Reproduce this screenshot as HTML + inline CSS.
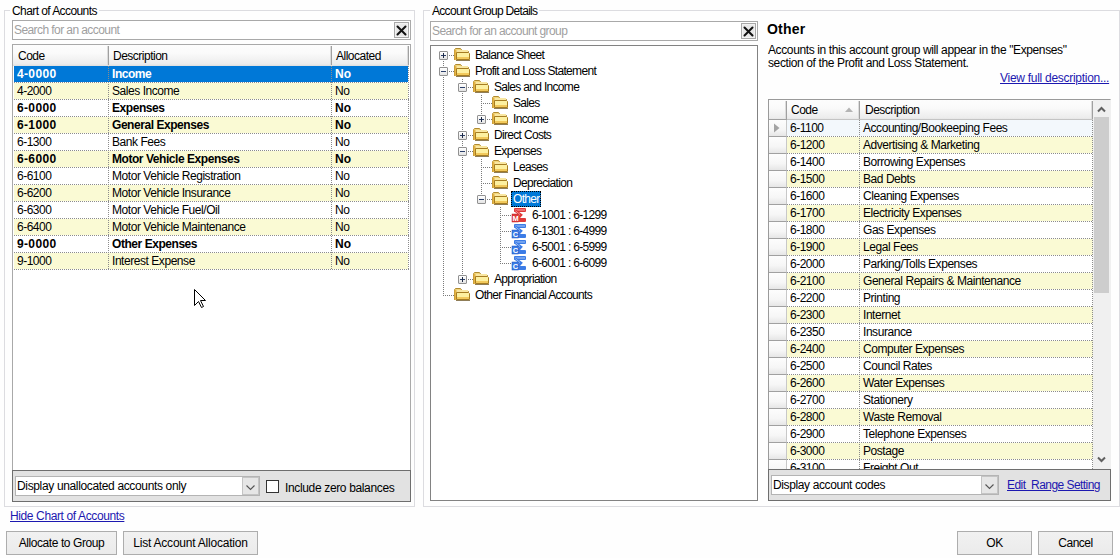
<!DOCTYPE html><html><head><meta charset="utf-8"><style>
*{box-sizing:border-box;margin:0;padding:0}
html,body{width:1120px;height:558px;overflow:hidden;background:#fefefe;font-family:"Liberation Sans",sans-serif;font-size:12px;letter-spacing:-0.5px;color:#000}
.a{position:absolute}
.grp{position:absolute;border:1px solid #dcdce0}
.gt{position:absolute;background:#fefefe;padding:0 2px;line-height:13px;white-space:nowrap}
.sb{position:absolute;border:1px solid #a9a9a9;background:#fff}
.ph{position:absolute;color:#a0a0a0;white-space:nowrap;line-height:13px}
.xb{position:absolute;width:15px;height:16px;border:1px solid #a8a8a8;background:#e8e8e8;box-shadow:inset 0 0 0 1px #f2f2f2}
.t{position:absolute;white-space:nowrap;line-height:13px}
.b{font-weight:bold;letter-spacing:-0.45px}
.btn{position:absolute;border:1px solid #adadad;background:linear-gradient(#f1f1f1,#ebebeb);text-align:center;line-height:22px;white-space:nowrap}
.lnk{position:absolute;color:#1c18b0;text-decoration:underline;white-space:nowrap;line-height:13px}
.bar{position:absolute;background:#e2e2e2;border:1px solid #6e6e6e}
.cb{position:absolute;background:#fff;border:1px solid #b4b4b4}
.cba{position:absolute;top:0;right:0;width:17px;bottom:0;background:#e6e6e6;border:1px solid #c4c4c4}
.hd{position:absolute;background:linear-gradient(#fdfdfd,#fafafa 40%,#ececec 90%,#dedede)}
.hdv{position:absolute;width:2px;background:linear-gradient(to right,#dcdcdc 0 1px,#a0a0a0 1px 2px)}
.dh{position:absolute;height:1px;background:repeating-linear-gradient(to right,#8c8c8c 0 1px,transparent 1px 2px)}
.dv{position:absolute;width:1px;background:repeating-linear-gradient(to bottom,#8c8c8c 0 1px,transparent 1px 2px)}
.c{position:absolute;white-space:nowrap;line-height:17px;height:17px}
</style></head><body>
<div class="grp" style="left:4px;top:10px;width:411px;height:497px"></div>
<div class="gt" style="left:10px;top:5px;letter-spacing:-0.58px">Chart of Accounts</div>
<div class="sb" style="left:12px;top:20px;width:399px;height:20px"></div>
<div class="ph" style="left:14px;top:24px;letter-spacing:-0.58px">Search for an account</div>
<div class="xb" style="left:394px;top:22px"><svg width="13" height="14" style="position:absolute;left:0;top:0"><path d="M2.5,3.5 L10.5,11.5 M10.5,3.5 L2.5,11.5" stroke="#111" stroke-width="2" stroke-linecap="round"/></svg></div>
<div class="a" style="left:12px;top:44px;width:399px;height:427px;border:1px solid #a9a9a9;background:#fff"></div>
<div class="hd" style="left:13px;top:45px;width:396px;height:21px"></div>
<div class="hdv" style="left:107px;top:46px;height:19px"></div>
<div class="hdv" style="left:330px;top:46px;height:19px"></div>
<div class="hdv" style="left:407px;top:46px;height:19px"></div>
<div class="c" style="left:18px;top:48px">Code</div>
<div class="c" style="left:113px;top:48px">Description</div>
<div class="c" style="left:336px;top:48px">Allocated</div>
<div class="a" style="left:14px;top:66px;width:394px;height:16px;background:#0078d7"></div>
<div class="dh" style="left:14px;top:82px;width:395px"></div>
<div class="c b" style="left:17px;top:66px;color:#fff;letter-spacing:0.35px">4-0000</div>
<div class="c b" style="left:112px;top:66px;color:#fff;letter-spacing:-0.45px">Income</div>
<div class="c b" style="left:335px;top:66px;color:#fff;letter-spacing:0px">No</div>
<div class="a" style="left:14px;top:83px;width:394px;height:16px;background:#fafad4"></div>
<div class="dh" style="left:14px;top:99px;width:395px"></div>
<div class="c" style="left:17px;top:83px;color:#000">4-2000</div>
<div class="c" style="left:112px;top:83px;color:#000;letter-spacing:-0.45px">Sales Income</div>
<div class="c" style="left:335px;top:83px;color:#000">No</div>
<div class="a" style="left:14px;top:100px;width:394px;height:16px;background:#ffffff"></div>
<div class="dh" style="left:14px;top:116px;width:395px"></div>
<div class="c b" style="left:17px;top:100px;color:#000;letter-spacing:0.35px">6-0000</div>
<div class="c b" style="left:112px;top:100px;color:#000;letter-spacing:-0.45px">Expenses</div>
<div class="c b" style="left:335px;top:100px;color:#000;letter-spacing:0px">No</div>
<div class="a" style="left:14px;top:117px;width:394px;height:16px;background:#fafad4"></div>
<div class="dh" style="left:14px;top:133px;width:395px"></div>
<div class="c b" style="left:17px;top:117px;color:#000;letter-spacing:0.35px">6-1000</div>
<div class="c b" style="left:112px;top:117px;color:#000;letter-spacing:-0.45px">General Expenses</div>
<div class="c b" style="left:335px;top:117px;color:#000;letter-spacing:0px">No</div>
<div class="a" style="left:14px;top:134px;width:394px;height:16px;background:#ffffff"></div>
<div class="dh" style="left:14px;top:150px;width:395px"></div>
<div class="c" style="left:17px;top:134px;color:#000">6-1300</div>
<div class="c" style="left:112px;top:134px;color:#000;letter-spacing:-0.45px">Bank Fees</div>
<div class="c" style="left:335px;top:134px;color:#000">No</div>
<div class="a" style="left:14px;top:151px;width:394px;height:16px;background:#fafad4"></div>
<div class="dh" style="left:14px;top:167px;width:395px"></div>
<div class="c b" style="left:17px;top:151px;color:#000;letter-spacing:0.35px">6-6000</div>
<div class="c b" style="left:112px;top:151px;color:#000;letter-spacing:-0.45px">Motor Vehicle Expenses</div>
<div class="c b" style="left:335px;top:151px;color:#000;letter-spacing:0px">No</div>
<div class="a" style="left:14px;top:168px;width:394px;height:16px;background:#ffffff"></div>
<div class="dh" style="left:14px;top:184px;width:395px"></div>
<div class="c" style="left:17px;top:168px;color:#000">6-6100</div>
<div class="c" style="left:112px;top:168px;color:#000;letter-spacing:-0.45px">Motor Vehicle Registration</div>
<div class="c" style="left:335px;top:168px;color:#000">No</div>
<div class="a" style="left:14px;top:185px;width:394px;height:16px;background:#fafad4"></div>
<div class="dh" style="left:14px;top:201px;width:395px"></div>
<div class="c" style="left:17px;top:185px;color:#000">6-6200</div>
<div class="c" style="left:112px;top:185px;color:#000;letter-spacing:-0.45px">Motor Vehicle Insurance</div>
<div class="c" style="left:335px;top:185px;color:#000">No</div>
<div class="a" style="left:14px;top:202px;width:394px;height:16px;background:#ffffff"></div>
<div class="dh" style="left:14px;top:218px;width:395px"></div>
<div class="c" style="left:17px;top:202px;color:#000">6-6300</div>
<div class="c" style="left:112px;top:202px;color:#000;letter-spacing:-0.45px">Motor Vehicle Fuel/Oil</div>
<div class="c" style="left:335px;top:202px;color:#000">No</div>
<div class="a" style="left:14px;top:219px;width:394px;height:16px;background:#fafad4"></div>
<div class="dh" style="left:14px;top:235px;width:395px"></div>
<div class="c" style="left:17px;top:219px;color:#000">6-6400</div>
<div class="c" style="left:112px;top:219px;color:#000;letter-spacing:-0.45px">Motor Vehicle Maintenance</div>
<div class="c" style="left:335px;top:219px;color:#000">No</div>
<div class="a" style="left:14px;top:236px;width:394px;height:16px;background:#ffffff"></div>
<div class="dh" style="left:14px;top:252px;width:395px"></div>
<div class="c b" style="left:17px;top:236px;color:#000;letter-spacing:0.35px">9-0000</div>
<div class="c b" style="left:112px;top:236px;color:#000;letter-spacing:-0.45px">Other Expenses</div>
<div class="c b" style="left:335px;top:236px;color:#000;letter-spacing:0px">No</div>
<div class="a" style="left:14px;top:253px;width:394px;height:16px;background:#fafad4"></div>
<div class="dh" style="left:14px;top:269px;width:395px"></div>
<div class="c" style="left:17px;top:253px;color:#000">9-1000</div>
<div class="c" style="left:112px;top:253px;color:#000;letter-spacing:-0.45px">Interest Expense</div>
<div class="c" style="left:335px;top:253px;color:#000">No</div>
<div class="dv" style="left:108px;top:66px;height:204px"></div>
<div class="dv" style="left:331px;top:66px;height:204px"></div>
<div class="dv" style="left:408px;top:66px;height:204px"></div>
<svg class="a" style="left:194px;top:289px" width="13" height="20"><path d="M0.5,0.5 L0.5,16.5 L4.5,12.5 L7.5,18.5 L9.5,17.5 L6.5,11.5 L11.5,11.5 Z" fill="#fff" stroke="#000" stroke-width="1"/></svg>
<div class="bar" style="left:12px;top:470px;width:399px;height:32px"></div>
<div class="cb" style="left:15px;top:476px;width:245px;height:20px"><div class="cba"><svg width="15" height="18" style="position:absolute;left:0;top:0"><path d="M3.5,7.5 L7.5,11.5 L11.5,7.5" fill="none" stroke="#555" stroke-width="1.1"/></svg></div></div>
<div class="t" style="left:17px;top:480px;letter-spacing:-0.35px">Display unallocated accounts only</div>
<div class="a" style="left:266px;top:480px;width:13px;height:13px;border:1px solid #333;background:#fff"></div>
<div class="t" style="left:285px;top:482px;letter-spacing:-0.35px">Include zero balances</div>
<div class="lnk" style="left:10px;top:510px;letter-spacing:-0.38px">Hide Chart of Accounts</div>
<div class="btn" style="left:6px;top:531px;width:111px;height:24px;letter-spacing:-0.42px">Allocate to Group</div>
<div class="btn" style="left:123px;top:531px;width:135px;height:24px;letter-spacing:-0.22px">List Account Allocation</div>
<div class="grp" style="left:423px;top:10px;width:697px;height:497px"></div>
<div class="gt" style="left:430px;top:5px;letter-spacing:-0.7px">Account Group Details</div>
<div class="sb" style="left:430px;top:21px;width:328px;height:20px"></div>
<div class="ph" style="left:432px;top:25px;letter-spacing:-0.6px">Search for an account group</div>
<div class="xb" style="left:741px;top:23px"><svg width="13" height="14" style="position:absolute;left:0;top:0"><path d="M2.5,3.5 L10.5,11.5 M10.5,3.5 L2.5,11.5" stroke="#111" stroke-width="2" stroke-linecap="round"/></svg></div>
<div class="a" style="left:430px;top:45px;width:328px;height:456px;border:1px solid #828282;background:#fff"></div>
<div class="a" style="left:443px;top:55px;width:1px;height:241px;background:repeating-linear-gradient(to bottom,#7a7a7a 0 1px,transparent 1px 2px)"></div>
<div class="a" style="left:462px;top:79px;width:1px;height:201px;background:repeating-linear-gradient(to bottom,#7a7a7a 0 1px,transparent 1px 2px)"></div>
<div class="a" style="left:481px;top:95px;width:1px;height:25px;background:repeating-linear-gradient(to bottom,#7a7a7a 0 1px,transparent 1px 2px)"></div>
<div class="a" style="left:481px;top:159px;width:1px;height:41px;background:repeating-linear-gradient(to bottom,#7a7a7a 0 1px,transparent 1px 2px)"></div>
<div class="a" style="left:500px;top:207px;width:1px;height:57px;background:repeating-linear-gradient(to bottom,#7a7a7a 0 1px,transparent 1px 2px)"></div>
<div class="a" style="left:445px;top:55px;width:9px;height:1px;background:repeating-linear-gradient(to right,#7a7a7a 0 1px,transparent 1px 2px)"></div>
<div class="a" style="left:445px;top:71px;width:9px;height:1px;background:repeating-linear-gradient(to right,#7a7a7a 0 1px,transparent 1px 2px)"></div>
<div class="a" style="left:464px;top:87px;width:9px;height:1px;background:repeating-linear-gradient(to right,#7a7a7a 0 1px,transparent 1px 2px)"></div>
<div class="a" style="left:483px;top:103px;width:9px;height:1px;background:repeating-linear-gradient(to right,#7a7a7a 0 1px,transparent 1px 2px)"></div>
<div class="a" style="left:483px;top:119px;width:9px;height:1px;background:repeating-linear-gradient(to right,#7a7a7a 0 1px,transparent 1px 2px)"></div>
<div class="a" style="left:464px;top:135px;width:9px;height:1px;background:repeating-linear-gradient(to right,#7a7a7a 0 1px,transparent 1px 2px)"></div>
<div class="a" style="left:464px;top:151px;width:9px;height:1px;background:repeating-linear-gradient(to right,#7a7a7a 0 1px,transparent 1px 2px)"></div>
<div class="a" style="left:483px;top:167px;width:9px;height:1px;background:repeating-linear-gradient(to right,#7a7a7a 0 1px,transparent 1px 2px)"></div>
<div class="a" style="left:483px;top:183px;width:9px;height:1px;background:repeating-linear-gradient(to right,#7a7a7a 0 1px,transparent 1px 2px)"></div>
<div class="a" style="left:483px;top:199px;width:9px;height:1px;background:repeating-linear-gradient(to right,#7a7a7a 0 1px,transparent 1px 2px)"></div>
<div class="a" style="left:502px;top:215px;width:9px;height:1px;background:repeating-linear-gradient(to right,#7a7a7a 0 1px,transparent 1px 2px)"></div>
<div class="a" style="left:502px;top:231px;width:9px;height:1px;background:repeating-linear-gradient(to right,#7a7a7a 0 1px,transparent 1px 2px)"></div>
<div class="a" style="left:502px;top:247px;width:9px;height:1px;background:repeating-linear-gradient(to right,#7a7a7a 0 1px,transparent 1px 2px)"></div>
<div class="a" style="left:502px;top:263px;width:9px;height:1px;background:repeating-linear-gradient(to right,#7a7a7a 0 1px,transparent 1px 2px)"></div>
<div class="a" style="left:464px;top:279px;width:9px;height:1px;background:repeating-linear-gradient(to right,#7a7a7a 0 1px,transparent 1px 2px)"></div>
<div class="a" style="left:445px;top:295px;width:9px;height:1px;background:repeating-linear-gradient(to right,#7a7a7a 0 1px,transparent 1px 2px)"></div>
<div class="a" style="left:439px;top:51px;width:9px;height:9px;border:1px solid #919191;border-radius:1px;background:linear-gradient(#fff,#e4e4e4)"></div>
<div class="a" style="left:441px;top:55px;width:5px;height:1px;background:#2a3f6a"></div>
<div class="a" style="left:443px;top:53px;width:1px;height:5px;background:#1d2a44"></div>
<svg class="a" style="left:454px;top:48px" width="17" height="15" viewBox="0 0 17 15"><path d="M0.5,12 L0.5,1.8 L1.5,0.5 L6.5,0.5 L8,2.5 L13.5,2.5 L14.5,3.5 L14.5,4.5" fill="#f3d67c" stroke="#b08a30"/><rect x="1" y="2" width="13" height="2.5" fill="#f9e7a2"/><rect x="0.5" y="2" width="2" height="10" fill="#e6b444"/><path d="M2.5,4.5 L14.5,4.5 L15.5,5.5 L15.5,11.5 L2.5,11.5 Z" fill="#fdf0a0" stroke="#a67d22"/><rect x="3" y="9" width="12" height="2" fill="#f2c95c"/><rect x="2" y="12" width="14" height="1" fill="#6a5120" opacity="0.75"/></svg>
<div class="c" style="left:475px;top:47px;line-height:16px;letter-spacing:-0.68px">Balance Sheet</div>
<div class="a" style="left:439px;top:67px;width:9px;height:9px;border:1px solid #919191;border-radius:1px;background:linear-gradient(#fff,#e4e4e4)"></div>
<div class="a" style="left:441px;top:71px;width:5px;height:1px;background:#2a3f6a"></div>
<svg class="a" style="left:454px;top:64px" width="17" height="15" viewBox="0 0 17 15"><path d="M0.5,12 L0.5,1.8 L1.5,0.5 L6.5,0.5 L8,2.5 L13.5,2.5 L14.5,3.5 L14.5,4.5" fill="#f3d67c" stroke="#b08a30"/><rect x="1" y="2" width="13" height="2.5" fill="#f9e7a2"/><rect x="0.5" y="2" width="2" height="10" fill="#e6b444"/><path d="M2.5,4.5 L14.5,4.5 L15.5,5.5 L15.5,11.5 L2.5,11.5 Z" fill="#fdf0a0" stroke="#a67d22"/><rect x="3" y="9" width="12" height="2" fill="#f2c95c"/><rect x="2" y="12" width="14" height="1" fill="#6a5120" opacity="0.75"/></svg>
<div class="c" style="left:475px;top:63px;line-height:16px;letter-spacing:-0.68px">Profit and Loss Statement</div>
<div class="a" style="left:458px;top:83px;width:9px;height:9px;border:1px solid #919191;border-radius:1px;background:linear-gradient(#fff,#e4e4e4)"></div>
<div class="a" style="left:460px;top:87px;width:5px;height:1px;background:#2a3f6a"></div>
<svg class="a" style="left:473px;top:80px" width="17" height="15" viewBox="0 0 17 15"><path d="M0.5,12 L0.5,1.8 L1.5,0.5 L6.5,0.5 L8,2.5 L13.5,2.5 L14.5,3.5 L14.5,4.5" fill="#f3d67c" stroke="#b08a30"/><rect x="1" y="2" width="13" height="2.5" fill="#f9e7a2"/><rect x="0.5" y="2" width="2" height="10" fill="#e6b444"/><path d="M2.5,4.5 L14.5,4.5 L15.5,5.5 L15.5,11.5 L2.5,11.5 Z" fill="#fdf0a0" stroke="#a67d22"/><rect x="3" y="9" width="12" height="2" fill="#f2c95c"/><rect x="2" y="12" width="14" height="1" fill="#6a5120" opacity="0.75"/></svg>
<div class="c" style="left:494px;top:79px;line-height:16px;letter-spacing:-0.68px">Sales and Income</div>
<svg class="a" style="left:492px;top:96px" width="17" height="15" viewBox="0 0 17 15"><path d="M0.5,12 L0.5,1.8 L1.5,0.5 L6.5,0.5 L8,2.5 L13.5,2.5 L14.5,3.5 L14.5,4.5" fill="#f3d67c" stroke="#b08a30"/><rect x="1" y="2" width="13" height="2.5" fill="#f9e7a2"/><rect x="0.5" y="2" width="2" height="10" fill="#e6b444"/><path d="M2.5,4.5 L14.5,4.5 L15.5,5.5 L15.5,11.5 L2.5,11.5 Z" fill="#fdf0a0" stroke="#a67d22"/><rect x="3" y="9" width="12" height="2" fill="#f2c95c"/><rect x="2" y="12" width="14" height="1" fill="#6a5120" opacity="0.75"/></svg>
<div class="c" style="left:513px;top:95px;line-height:16px;letter-spacing:-0.68px">Sales</div>
<div class="a" style="left:477px;top:115px;width:9px;height:9px;border:1px solid #919191;border-radius:1px;background:linear-gradient(#fff,#e4e4e4)"></div>
<div class="a" style="left:479px;top:119px;width:5px;height:1px;background:#2a3f6a"></div>
<div class="a" style="left:481px;top:117px;width:1px;height:5px;background:#1d2a44"></div>
<svg class="a" style="left:492px;top:112px" width="17" height="15" viewBox="0 0 17 15"><path d="M0.5,12 L0.5,1.8 L1.5,0.5 L6.5,0.5 L8,2.5 L13.5,2.5 L14.5,3.5 L14.5,4.5" fill="#f3d67c" stroke="#b08a30"/><rect x="1" y="2" width="13" height="2.5" fill="#f9e7a2"/><rect x="0.5" y="2" width="2" height="10" fill="#e6b444"/><path d="M2.5,4.5 L14.5,4.5 L15.5,5.5 L15.5,11.5 L2.5,11.5 Z" fill="#fdf0a0" stroke="#a67d22"/><rect x="3" y="9" width="12" height="2" fill="#f2c95c"/><rect x="2" y="12" width="14" height="1" fill="#6a5120" opacity="0.75"/></svg>
<div class="c" style="left:513px;top:111px;line-height:16px;letter-spacing:-0.68px">Income</div>
<div class="a" style="left:458px;top:131px;width:9px;height:9px;border:1px solid #919191;border-radius:1px;background:linear-gradient(#fff,#e4e4e4)"></div>
<div class="a" style="left:460px;top:135px;width:5px;height:1px;background:#2a3f6a"></div>
<div class="a" style="left:462px;top:133px;width:1px;height:5px;background:#1d2a44"></div>
<svg class="a" style="left:473px;top:128px" width="17" height="15" viewBox="0 0 17 15"><path d="M0.5,12 L0.5,1.8 L1.5,0.5 L6.5,0.5 L8,2.5 L13.5,2.5 L14.5,3.5 L14.5,4.5" fill="#f3d67c" stroke="#b08a30"/><rect x="1" y="2" width="13" height="2.5" fill="#f9e7a2"/><rect x="0.5" y="2" width="2" height="10" fill="#e6b444"/><path d="M2.5,4.5 L14.5,4.5 L15.5,5.5 L15.5,11.5 L2.5,11.5 Z" fill="#fdf0a0" stroke="#a67d22"/><rect x="3" y="9" width="12" height="2" fill="#f2c95c"/><rect x="2" y="12" width="14" height="1" fill="#6a5120" opacity="0.75"/></svg>
<div class="c" style="left:494px;top:127px;line-height:16px;letter-spacing:-0.68px">Direct Costs</div>
<div class="a" style="left:458px;top:147px;width:9px;height:9px;border:1px solid #919191;border-radius:1px;background:linear-gradient(#fff,#e4e4e4)"></div>
<div class="a" style="left:460px;top:151px;width:5px;height:1px;background:#2a3f6a"></div>
<svg class="a" style="left:473px;top:144px" width="17" height="15" viewBox="0 0 17 15"><path d="M0.5,12 L0.5,1.8 L1.5,0.5 L6.5,0.5 L8,2.5 L13.5,2.5 L14.5,3.5 L14.5,4.5" fill="#f3d67c" stroke="#b08a30"/><rect x="1" y="2" width="13" height="2.5" fill="#f9e7a2"/><rect x="0.5" y="2" width="2" height="10" fill="#e6b444"/><path d="M2.5,4.5 L14.5,4.5 L15.5,5.5 L15.5,11.5 L2.5,11.5 Z" fill="#fdf0a0" stroke="#a67d22"/><rect x="3" y="9" width="12" height="2" fill="#f2c95c"/><rect x="2" y="12" width="14" height="1" fill="#6a5120" opacity="0.75"/></svg>
<div class="c" style="left:494px;top:143px;line-height:16px;letter-spacing:-0.68px">Expenses</div>
<svg class="a" style="left:492px;top:160px" width="17" height="15" viewBox="0 0 17 15"><path d="M0.5,12 L0.5,1.8 L1.5,0.5 L6.5,0.5 L8,2.5 L13.5,2.5 L14.5,3.5 L14.5,4.5" fill="#f3d67c" stroke="#b08a30"/><rect x="1" y="2" width="13" height="2.5" fill="#f9e7a2"/><rect x="0.5" y="2" width="2" height="10" fill="#e6b444"/><path d="M2.5,4.5 L14.5,4.5 L15.5,5.5 L15.5,11.5 L2.5,11.5 Z" fill="#fdf0a0" stroke="#a67d22"/><rect x="3" y="9" width="12" height="2" fill="#f2c95c"/><rect x="2" y="12" width="14" height="1" fill="#6a5120" opacity="0.75"/></svg>
<div class="c" style="left:513px;top:159px;line-height:16px;letter-spacing:-0.68px">Leases</div>
<svg class="a" style="left:492px;top:176px" width="17" height="15" viewBox="0 0 17 15"><path d="M0.5,12 L0.5,1.8 L1.5,0.5 L6.5,0.5 L8,2.5 L13.5,2.5 L14.5,3.5 L14.5,4.5" fill="#f3d67c" stroke="#b08a30"/><rect x="1" y="2" width="13" height="2.5" fill="#f9e7a2"/><rect x="0.5" y="2" width="2" height="10" fill="#e6b444"/><path d="M2.5,4.5 L14.5,4.5 L15.5,5.5 L15.5,11.5 L2.5,11.5 Z" fill="#fdf0a0" stroke="#a67d22"/><rect x="3" y="9" width="12" height="2" fill="#f2c95c"/><rect x="2" y="12" width="14" height="1" fill="#6a5120" opacity="0.75"/></svg>
<div class="c" style="left:513px;top:175px;line-height:16px;letter-spacing:-0.68px">Depreciation</div>
<div class="a" style="left:477px;top:195px;width:9px;height:9px;border:1px solid #919191;border-radius:1px;background:linear-gradient(#fff,#e4e4e4)"></div>
<div class="a" style="left:479px;top:199px;width:5px;height:1px;background:#2a3f6a"></div>
<svg class="a" style="left:492px;top:192px" width="17" height="15" viewBox="0 0 17 15"><path d="M0.5,12 L0.5,1.8 L1.5,0.5 L6.5,0.5 L8,2.5 L13.5,2.5 L14.5,3.5 L14.5,4.5" fill="#f3d67c" stroke="#b08a30"/><rect x="1" y="2" width="13" height="2.5" fill="#f9e7a2"/><rect x="0.5" y="2" width="2" height="10" fill="#e6b444"/><path d="M2.5,4.5 L14.5,4.5 L15.5,5.5 L15.5,11.5 L2.5,11.5 Z" fill="#fdf0a0" stroke="#a67d22"/><rect x="3" y="9" width="12" height="2" fill="#f2c95c"/><rect x="2" y="12" width="14" height="1" fill="#6a5120" opacity="0.75"/></svg>
<div class="a" style="left:511px;top:191px;width:30px;height:16px;background:#0078d7;outline:1px dotted #000;outline-offset:-1px"></div>
<div class="c" style="left:513px;top:191px;line-height:16px;color:#fff;letter-spacing:-0.68px">Other</div>
<svg class="a" style="left:511px;top:207px" width="16" height="16" viewBox="0 0 16 16"><rect x="3" y="1" width="12" height="4" rx="1" fill="#e03a3a"/><rect x="4" y="2.5" width="10" height="1" fill="#f6a8a8"/><path d="M4,3.5 L10,8 L7,11.5" fill="none" stroke="#e03a3a" stroke-width="2.6"/><path d="M4.5,3.8 L9,7.6" fill="none" stroke="#f6a8a8" stroke-width="0.8"/><rect x="7" y="11" width="8" height="4" rx="1" fill="#e03a3a"/><rect x="1" y="7" width="6.5" height="8" fill="#e03a3a" stroke="#b82020" stroke-width="0.5"/><text x="4.3" y="14" font-family="Liberation Sans" font-size="7.5" font-weight="bold" fill="#fff" text-anchor="middle" transform="scale(1,1)">M</text></svg>
<div class="c" style="left:532px;top:207px;line-height:16px;letter-spacing:-0.68px">6-1001 : 6-1299</div>
<svg class="a" style="left:511px;top:223px" width="16" height="16" viewBox="0 0 16 16"><rect x="3" y="1" width="12" height="4" rx="1" fill="#3c7ce6"/><rect x="4" y="2.5" width="10" height="1" fill="#a8c8f6"/><path d="M4,3.5 L10,8 L7,11.5" fill="none" stroke="#3c7ce6" stroke-width="2.6"/><path d="M4.5,3.8 L9,7.6" fill="none" stroke="#a8c8f6" stroke-width="0.8"/><rect x="7" y="11" width="8" height="4" rx="1" fill="#3c7ce6"/><rect x="1" y="7" width="6.5" height="8" fill="#3c7ce6" stroke="#1d50b8" stroke-width="0.5"/><text x="4.3" y="14" font-family="Liberation Sans" font-size="7.5" font-weight="bold" fill="#fff" text-anchor="middle" transform="scale(1,1)">C</text></svg>
<div class="c" style="left:532px;top:223px;line-height:16px;letter-spacing:-0.68px">6-1301 : 6-4999</div>
<svg class="a" style="left:511px;top:239px" width="16" height="16" viewBox="0 0 16 16"><rect x="3" y="1" width="12" height="4" rx="1" fill="#3c7ce6"/><rect x="4" y="2.5" width="10" height="1" fill="#a8c8f6"/><path d="M4,3.5 L10,8 L7,11.5" fill="none" stroke="#3c7ce6" stroke-width="2.6"/><path d="M4.5,3.8 L9,7.6" fill="none" stroke="#a8c8f6" stroke-width="0.8"/><rect x="7" y="11" width="8" height="4" rx="1" fill="#3c7ce6"/><rect x="1" y="7" width="6.5" height="8" fill="#3c7ce6" stroke="#1d50b8" stroke-width="0.5"/><text x="4.3" y="14" font-family="Liberation Sans" font-size="7.5" font-weight="bold" fill="#fff" text-anchor="middle" transform="scale(1,1)">C</text></svg>
<div class="c" style="left:532px;top:239px;line-height:16px;letter-spacing:-0.68px">6-5001 : 6-5999</div>
<svg class="a" style="left:511px;top:255px" width="16" height="16" viewBox="0 0 16 16"><rect x="3" y="1" width="12" height="4" rx="1" fill="#3c7ce6"/><rect x="4" y="2.5" width="10" height="1" fill="#a8c8f6"/><path d="M4,3.5 L10,8 L7,11.5" fill="none" stroke="#3c7ce6" stroke-width="2.6"/><path d="M4.5,3.8 L9,7.6" fill="none" stroke="#a8c8f6" stroke-width="0.8"/><rect x="7" y="11" width="8" height="4" rx="1" fill="#3c7ce6"/><rect x="1" y="7" width="6.5" height="8" fill="#3c7ce6" stroke="#1d50b8" stroke-width="0.5"/><text x="4.3" y="14" font-family="Liberation Sans" font-size="7.5" font-weight="bold" fill="#fff" text-anchor="middle" transform="scale(1,1)">C</text></svg>
<div class="c" style="left:532px;top:255px;line-height:16px;letter-spacing:-0.68px">6-6001 : 6-6099</div>
<div class="a" style="left:458px;top:275px;width:9px;height:9px;border:1px solid #919191;border-radius:1px;background:linear-gradient(#fff,#e4e4e4)"></div>
<div class="a" style="left:460px;top:279px;width:5px;height:1px;background:#2a3f6a"></div>
<div class="a" style="left:462px;top:277px;width:1px;height:5px;background:#1d2a44"></div>
<svg class="a" style="left:473px;top:272px" width="17" height="15" viewBox="0 0 17 15"><path d="M0.5,12 L0.5,1.8 L1.5,0.5 L6.5,0.5 L8,2.5 L13.5,2.5 L14.5,3.5 L14.5,4.5" fill="#f3d67c" stroke="#b08a30"/><rect x="1" y="2" width="13" height="2.5" fill="#f9e7a2"/><rect x="0.5" y="2" width="2" height="10" fill="#e6b444"/><path d="M2.5,4.5 L14.5,4.5 L15.5,5.5 L15.5,11.5 L2.5,11.5 Z" fill="#fdf0a0" stroke="#a67d22"/><rect x="3" y="9" width="12" height="2" fill="#f2c95c"/><rect x="2" y="12" width="14" height="1" fill="#6a5120" opacity="0.75"/></svg>
<div class="c" style="left:494px;top:271px;line-height:16px;letter-spacing:-0.68px">Appropriation</div>
<svg class="a" style="left:454px;top:288px" width="17" height="15" viewBox="0 0 17 15"><path d="M0.5,12 L0.5,1.8 L1.5,0.5 L6.5,0.5 L8,2.5 L13.5,2.5 L14.5,3.5 L14.5,4.5" fill="#f3d67c" stroke="#b08a30"/><rect x="1" y="2" width="13" height="2.5" fill="#f9e7a2"/><rect x="0.5" y="2" width="2" height="10" fill="#e6b444"/><path d="M2.5,4.5 L14.5,4.5 L15.5,5.5 L15.5,11.5 L2.5,11.5 Z" fill="#fdf0a0" stroke="#a67d22"/><rect x="3" y="9" width="12" height="2" fill="#f2c95c"/><rect x="2" y="12" width="14" height="1" fill="#6a5120" opacity="0.75"/></svg>
<div class="c" style="left:475px;top:287px;line-height:16px;letter-spacing:-0.68px">Other Financial Accounts</div>
<div class="t b" style="left:767px;top:21px;font-size:14px;line-height:16px;letter-spacing:0.2px">Other</div>
<div class="t" style="left:768px;top:44px;letter-spacing:-0.38px">Accounts in this account group will appear in the "Expenses"</div>
<div class="t" style="left:768px;top:57px;letter-spacing:-0.38px">section of the Profit and Loss Statement.</div>
<div class="lnk" style="left:1000px;top:72px;letter-spacing:-0.28px">View full description...</div>
<div class="a" style="left:768px;top:99px;width:343px;height:371px;border:1px solid #9a9a9a;border-right-color:#f0f0f0;background:#fff"></div>
<div class="a" style="left:769px;top:100px;width:324px;height:369px;overflow:hidden">
<div class="hd" style="left:0;top:0;width:324px;height:20px"></div>
<div class="a" style="left:0;top:19px;width:18px;height:1px;background:#a0a0a0"></div><div class="a" style="left:18px;top:19px;width:306px;height:1px;background:#c4c4c4"></div>
<div class="hdv" style="left:16px;top:1px;height:18px"></div>
<div class="hdv" style="left:89px;top:1px;height:18px"></div>
<div class="hdv" style="left:322px;top:1px;height:18px"></div>
<div class="c" style="left:22px;top:2px">Code</div>
<svg class="a" style="left:76px;top:7px" width="8" height="5"><path d="M0,5 L4,0.5 L8,5 Z" fill="#b4b4b4"/></svg>
<div class="c" style="left:96px;top:2px">Description</div>
<div class="a" style="left:18px;top:20px;width:306px;height:16px;background:#f3f8fc"></div>
<div class="dh" style="left:18px;top:36px;width:306px"></div>
<div class="a" style="left:0;top:20px;width:18px;height:17px;background:linear-gradient(#fdfdfd,#f6f6f6 60%,#e6e6e6);border-right:1px solid #c8c8c8;border-bottom:1px solid #a0a0a0"></div>
<div class="c" style="left:21px;top:20px">6-1100</div>
<div class="c" style="left:94px;top:20px;letter-spacing:-0.45px">Accounting/Bookeeping Fees</div>
<div class="a" style="left:18px;top:37px;width:306px;height:16px;background:#fafad4"></div>
<div class="dh" style="left:18px;top:53px;width:306px"></div>
<div class="a" style="left:0;top:37px;width:18px;height:17px;background:linear-gradient(#fdfdfd,#f6f6f6 60%,#e6e6e6);border-right:1px solid #c8c8c8;border-bottom:1px solid #a0a0a0"></div>
<div class="c" style="left:21px;top:37px">6-1200</div>
<div class="c" style="left:94px;top:37px;letter-spacing:-0.45px">Advertising &amp; Marketing</div>
<div class="a" style="left:18px;top:54px;width:306px;height:16px;background:#ffffff"></div>
<div class="dh" style="left:18px;top:70px;width:306px"></div>
<div class="a" style="left:0;top:54px;width:18px;height:17px;background:linear-gradient(#fdfdfd,#f6f6f6 60%,#e6e6e6);border-right:1px solid #c8c8c8;border-bottom:1px solid #a0a0a0"></div>
<div class="c" style="left:21px;top:54px">6-1400</div>
<div class="c" style="left:94px;top:54px;letter-spacing:-0.45px">Borrowing Expenses</div>
<div class="a" style="left:18px;top:71px;width:306px;height:16px;background:#fafad4"></div>
<div class="dh" style="left:18px;top:87px;width:306px"></div>
<div class="a" style="left:0;top:71px;width:18px;height:17px;background:linear-gradient(#fdfdfd,#f6f6f6 60%,#e6e6e6);border-right:1px solid #c8c8c8;border-bottom:1px solid #a0a0a0"></div>
<div class="c" style="left:21px;top:71px">6-1500</div>
<div class="c" style="left:94px;top:71px;letter-spacing:-0.45px">Bad Debts</div>
<div class="a" style="left:18px;top:88px;width:306px;height:16px;background:#ffffff"></div>
<div class="dh" style="left:18px;top:104px;width:306px"></div>
<div class="a" style="left:0;top:88px;width:18px;height:17px;background:linear-gradient(#fdfdfd,#f6f6f6 60%,#e6e6e6);border-right:1px solid #c8c8c8;border-bottom:1px solid #a0a0a0"></div>
<div class="c" style="left:21px;top:88px">6-1600</div>
<div class="c" style="left:94px;top:88px;letter-spacing:-0.45px">Cleaning Expenses</div>
<div class="a" style="left:18px;top:105px;width:306px;height:16px;background:#fafad4"></div>
<div class="dh" style="left:18px;top:121px;width:306px"></div>
<div class="a" style="left:0;top:105px;width:18px;height:17px;background:linear-gradient(#fdfdfd,#f6f6f6 60%,#e6e6e6);border-right:1px solid #c8c8c8;border-bottom:1px solid #a0a0a0"></div>
<div class="c" style="left:21px;top:105px">6-1700</div>
<div class="c" style="left:94px;top:105px;letter-spacing:-0.45px">Electricity Expenses</div>
<div class="a" style="left:18px;top:122px;width:306px;height:16px;background:#ffffff"></div>
<div class="dh" style="left:18px;top:138px;width:306px"></div>
<div class="a" style="left:0;top:122px;width:18px;height:17px;background:linear-gradient(#fdfdfd,#f6f6f6 60%,#e6e6e6);border-right:1px solid #c8c8c8;border-bottom:1px solid #a0a0a0"></div>
<div class="c" style="left:21px;top:122px">6-1800</div>
<div class="c" style="left:94px;top:122px;letter-spacing:-0.45px">Gas Expenses</div>
<div class="a" style="left:18px;top:139px;width:306px;height:16px;background:#fafad4"></div>
<div class="dh" style="left:18px;top:155px;width:306px"></div>
<div class="a" style="left:0;top:139px;width:18px;height:17px;background:linear-gradient(#fdfdfd,#f6f6f6 60%,#e6e6e6);border-right:1px solid #c8c8c8;border-bottom:1px solid #a0a0a0"></div>
<div class="c" style="left:21px;top:139px">6-1900</div>
<div class="c" style="left:94px;top:139px;letter-spacing:-0.45px">Legal Fees</div>
<div class="a" style="left:18px;top:156px;width:306px;height:16px;background:#ffffff"></div>
<div class="dh" style="left:18px;top:172px;width:306px"></div>
<div class="a" style="left:0;top:156px;width:18px;height:17px;background:linear-gradient(#fdfdfd,#f6f6f6 60%,#e6e6e6);border-right:1px solid #c8c8c8;border-bottom:1px solid #a0a0a0"></div>
<div class="c" style="left:21px;top:156px">6-2000</div>
<div class="c" style="left:94px;top:156px;letter-spacing:-0.45px">Parking/Tolls Expenses</div>
<div class="a" style="left:18px;top:173px;width:306px;height:16px;background:#fafad4"></div>
<div class="dh" style="left:18px;top:189px;width:306px"></div>
<div class="a" style="left:0;top:173px;width:18px;height:17px;background:linear-gradient(#fdfdfd,#f6f6f6 60%,#e6e6e6);border-right:1px solid #c8c8c8;border-bottom:1px solid #a0a0a0"></div>
<div class="c" style="left:21px;top:173px">6-2100</div>
<div class="c" style="left:94px;top:173px;letter-spacing:-0.45px">General Repairs &amp; Maintenance</div>
<div class="a" style="left:18px;top:190px;width:306px;height:16px;background:#ffffff"></div>
<div class="dh" style="left:18px;top:206px;width:306px"></div>
<div class="a" style="left:0;top:190px;width:18px;height:17px;background:linear-gradient(#fdfdfd,#f6f6f6 60%,#e6e6e6);border-right:1px solid #c8c8c8;border-bottom:1px solid #a0a0a0"></div>
<div class="c" style="left:21px;top:190px">6-2200</div>
<div class="c" style="left:94px;top:190px;letter-spacing:-0.45px">Printing</div>
<div class="a" style="left:18px;top:207px;width:306px;height:16px;background:#fafad4"></div>
<div class="dh" style="left:18px;top:223px;width:306px"></div>
<div class="a" style="left:0;top:207px;width:18px;height:17px;background:linear-gradient(#fdfdfd,#f6f6f6 60%,#e6e6e6);border-right:1px solid #c8c8c8;border-bottom:1px solid #a0a0a0"></div>
<div class="c" style="left:21px;top:207px">6-2300</div>
<div class="c" style="left:94px;top:207px;letter-spacing:-0.45px">Internet</div>
<div class="a" style="left:18px;top:224px;width:306px;height:16px;background:#ffffff"></div>
<div class="dh" style="left:18px;top:240px;width:306px"></div>
<div class="a" style="left:0;top:224px;width:18px;height:17px;background:linear-gradient(#fdfdfd,#f6f6f6 60%,#e6e6e6);border-right:1px solid #c8c8c8;border-bottom:1px solid #a0a0a0"></div>
<div class="c" style="left:21px;top:224px">6-2350</div>
<div class="c" style="left:94px;top:224px;letter-spacing:-0.45px">Insurance</div>
<div class="a" style="left:18px;top:241px;width:306px;height:16px;background:#fafad4"></div>
<div class="dh" style="left:18px;top:257px;width:306px"></div>
<div class="a" style="left:0;top:241px;width:18px;height:17px;background:linear-gradient(#fdfdfd,#f6f6f6 60%,#e6e6e6);border-right:1px solid #c8c8c8;border-bottom:1px solid #a0a0a0"></div>
<div class="c" style="left:21px;top:241px">6-2400</div>
<div class="c" style="left:94px;top:241px;letter-spacing:-0.45px">Computer Expenses</div>
<div class="a" style="left:18px;top:258px;width:306px;height:16px;background:#ffffff"></div>
<div class="dh" style="left:18px;top:274px;width:306px"></div>
<div class="a" style="left:0;top:258px;width:18px;height:17px;background:linear-gradient(#fdfdfd,#f6f6f6 60%,#e6e6e6);border-right:1px solid #c8c8c8;border-bottom:1px solid #a0a0a0"></div>
<div class="c" style="left:21px;top:258px">6-2500</div>
<div class="c" style="left:94px;top:258px;letter-spacing:-0.45px">Council Rates</div>
<div class="a" style="left:18px;top:275px;width:306px;height:16px;background:#fafad4"></div>
<div class="dh" style="left:18px;top:291px;width:306px"></div>
<div class="a" style="left:0;top:275px;width:18px;height:17px;background:linear-gradient(#fdfdfd,#f6f6f6 60%,#e6e6e6);border-right:1px solid #c8c8c8;border-bottom:1px solid #a0a0a0"></div>
<div class="c" style="left:21px;top:275px">6-2600</div>
<div class="c" style="left:94px;top:275px;letter-spacing:-0.45px">Water Expenses</div>
<div class="a" style="left:18px;top:292px;width:306px;height:16px;background:#ffffff"></div>
<div class="dh" style="left:18px;top:308px;width:306px"></div>
<div class="a" style="left:0;top:292px;width:18px;height:17px;background:linear-gradient(#fdfdfd,#f6f6f6 60%,#e6e6e6);border-right:1px solid #c8c8c8;border-bottom:1px solid #a0a0a0"></div>
<div class="c" style="left:21px;top:292px">6-2700</div>
<div class="c" style="left:94px;top:292px;letter-spacing:-0.45px">Stationery</div>
<div class="a" style="left:18px;top:309px;width:306px;height:16px;background:#fafad4"></div>
<div class="dh" style="left:18px;top:325px;width:306px"></div>
<div class="a" style="left:0;top:309px;width:18px;height:17px;background:linear-gradient(#fdfdfd,#f6f6f6 60%,#e6e6e6);border-right:1px solid #c8c8c8;border-bottom:1px solid #a0a0a0"></div>
<div class="c" style="left:21px;top:309px">6-2800</div>
<div class="c" style="left:94px;top:309px;letter-spacing:-0.45px">Waste Removal</div>
<div class="a" style="left:18px;top:326px;width:306px;height:16px;background:#ffffff"></div>
<div class="dh" style="left:18px;top:342px;width:306px"></div>
<div class="a" style="left:0;top:326px;width:18px;height:17px;background:linear-gradient(#fdfdfd,#f6f6f6 60%,#e6e6e6);border-right:1px solid #c8c8c8;border-bottom:1px solid #a0a0a0"></div>
<div class="c" style="left:21px;top:326px">6-2900</div>
<div class="c" style="left:94px;top:326px;letter-spacing:-0.45px">Telephone Expenses</div>
<div class="a" style="left:18px;top:343px;width:306px;height:16px;background:#fafad4"></div>
<div class="dh" style="left:18px;top:359px;width:306px"></div>
<div class="a" style="left:0;top:343px;width:18px;height:17px;background:linear-gradient(#fdfdfd,#f6f6f6 60%,#e6e6e6);border-right:1px solid #c8c8c8;border-bottom:1px solid #a0a0a0"></div>
<div class="c" style="left:21px;top:343px">6-3000</div>
<div class="c" style="left:94px;top:343px;letter-spacing:-0.45px">Postage</div>
<div class="a" style="left:18px;top:360px;width:306px;height:16px;background:#ffffff"></div>
<div class="dh" style="left:18px;top:376px;width:306px"></div>
<div class="a" style="left:0;top:360px;width:18px;height:17px;background:linear-gradient(#fdfdfd,#f6f6f6 60%,#e6e6e6);border-right:1px solid #c8c8c8;border-bottom:1px solid #a0a0a0"></div>
<div class="c" style="left:21px;top:360px">6-3100</div>
<div class="c" style="left:94px;top:360px;letter-spacing:-0.45px">Freight Out</div>
<div class="dv" style="left:90px;top:20px;height:360px"></div>
<div class="dv" style="left:323px;top:20px;height:360px"></div>
<svg class="a" style="left:5px;top:23px" width="6" height="10"><path d="M0,0.5 L5.5,5 L0,9.5 Z" fill="#a4a4a4"/></svg>
</div>
<div class="a" style="left:1093px;top:100px;width:17px;height:369px;background:#f0f0f0"></div>
<div class="a" style="left:1094px;top:117px;width:15px;height:176px;background:#cdcdcd"></div>
<svg class="a" style="left:1097px;top:105px" width="9" height="8"><path d="M1,6.5 L4.5,3 L8,6.5" fill="none" stroke="#606060" stroke-width="2"/></svg>
<svg class="a" style="left:1097px;top:456px" width="9" height="8"><path d="M1,1.5 L4.5,5 L8,1.5" fill="none" stroke="#606060" stroke-width="2"/></svg>
<div class="bar" style="left:768px;top:469px;width:343px;height:32px"></div>
<div class="cb" style="left:771px;top:475px;width:228px;height:20px"><div class="cba"><svg width="15" height="18" style="position:absolute;left:0;top:0"><path d="M3.5,7.5 L7.5,11.5 L11.5,7.5" fill="none" stroke="#555" stroke-width="1.1"/></svg></div></div>
<div class="t" style="left:773px;top:479px;letter-spacing:-0.38px">Display account codes</div>
<div class="lnk" style="left:1007px;top:479px;letter-spacing:-0.55px">Edit&nbsp; Range Setting</div>
<div class="btn" style="left:957px;top:531px;width:75px;height:24px">OK</div>
<div class="btn" style="left:1038px;top:531px;width:75px;height:24px">Cancel</div>
</body></html>
